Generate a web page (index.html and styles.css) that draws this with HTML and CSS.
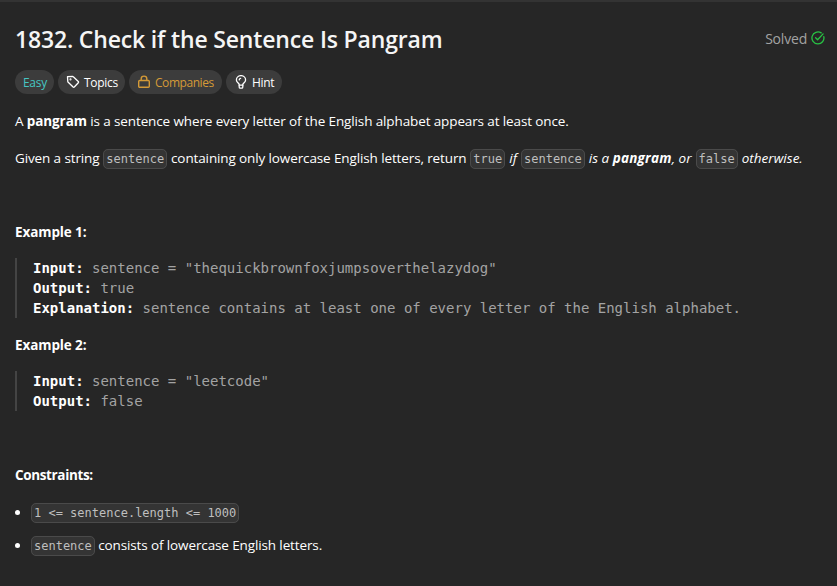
FILE: index.html
```html
<!DOCTYPE html>
<html lang="en">
<head>
<meta charset="utf-8">
<title>1832. Check if the Sentence Is Pangram</title>
<link rel="stylesheet" href="styles.css">
</head>
<body>
<main class="problem">
  <header class="heading">
    <h1>1832. Check if the Sentence Is Pangram</h1>
    <div class="status"><span>Solved</span>
      <svg width="14" height="14" viewBox="0 0 14 14" fill="none" stroke="currentColor" stroke-width="1.3" stroke-linecap="round" stroke-linejoin="round"><path d="M10.2 1.9A6 6 0 1 0 12.800 5.600"/><path d="M4.600 6.800l2 1.900 5.500-5.800"/></svg>
    </div>
  </header>
  <div class="tags">
    <span class="tag easy"><span>Easy</span></span>
    <span class="tag topics"><svg width="14" height="14" viewBox="0 0 14 14" fill="none" stroke="currentColor" stroke-width="1.3" stroke-linejoin="round"><path d="M1.500 1.700l5-.2q.5 0 .8.3l5 4.700q.6.6 0 1.200l-4 4.300q-.6.6-1.200 0L2.200 7.300Q1.800 6.900 1.800 6.400z"/><circle cx="4.500" cy="4.400" r=".4"/></svg><span>Topics</span></span>
    <span class="tag companies"><svg width="14" height="14" viewBox="0 0 14 14" fill="none" stroke="currentColor" stroke-width="1.4" stroke-linejoin="round"><rect x="1.700" y="5.500" width="10.600" height="6.800" rx="1"/><path d="M4.200 5.500V3.700a2.800 2.600 0 0 1 5.600 0v1.800"/></svg><span>Companies</span></span>
    <span class="tag hint"><svg width="14" height="14" viewBox="0 0 14 14" fill="none" stroke="currentColor" stroke-width="1.3" stroke-linecap="round" stroke-linejoin="round"><path d="M5.200 10.200V9.500C5.200 8.200 2.400 7.500 2.400 4.900a4.600 4.300 0 0 1 9.200 0c0 2.600-2.800 3.300-2.800 4.600v.7z"/><path d="M5.200 10.200v1.700q0 1.200 1 1.200h1.600q1 0 1-1.200v-1.700M5.200 4.900Q5.300 3.600 6.600 3.400"/></svg><span>Hint</span></span>
  </div>
  <section class="content">
    <p class="intro">A <strong>pangram</strong> is a sentence where every letter of the English alphabet appears at least once.</p>
    <p>Given a string <code>sentence</code> containing only lowercase English letters, return <code>true</code><em> if </em><code>sentence</code><em> is a <strong>pangram</strong>, or </em><code>false</code><em> otherwise.</em></p>
    <p>&nbsp;</p>
    <p><strong>Example 1:</strong></p>
<pre><b>Input:</b> sentence = "thequickbrownfoxjumpsoverthelazydog"
<b>Output:</b> true
<b>Explanation:</b> sentence contains at least one of every letter of the English alphabet.</pre>
    <p><strong>Example 2:</strong></p>
<pre><b>Input:</b> sentence = "leetcode"
<b>Output:</b> false</pre>
    <p>&nbsp;</p>
    <p class="constraints"><strong>Constraints:</strong></p>
    <ul>
      <li><code>1 &lt;= sentence.length &lt;= 1000</code></li>
      <li><code>sentence</code> consists of lowercase English letters.</li>
    </ul>
  </section>
</main>
</body>
</html>
```
FILE: styles.css
```css
* { box-sizing: border-box; }
body {
  margin: 0;
  height: 586px;
  overflow: hidden;
  background: #262626;
  border-top: 2px solid #333;
  color: #fff;
  font: 14px/21px "Open Sans", "Noto Sans", sans-serif;
}
.problem { padding: 21px 12px 0 15px; }
.heading { display: flex; justify-content: space-between; height: 32px; }
h1 { margin: 0; font-size: 23px; font-weight: 600; line-height: 33px; letter-spacing: -.17px; color: #f5f5f5; white-space: nowrap; }
.status { display: flex; align-items: center; gap: 4px; height: 30px; color: #a3a3a3; letter-spacing: -.2px; }
.status svg { color: #28c244; }
.tags { display: flex; gap: 4px; margin-top: 15px; }
.tag { display: flex; align-items: center; gap: 4px; height: 24px; padding: 0 8px; border-radius: 12px; background: #3c3c3c; font-size: 12px; line-height: 24px; white-space: nowrap; }
.tag span { padding-top: 2px; }
.easy { width: 39px; color: #46c6c2; letter-spacing: -.3px; }
.topics { width: 67px; letter-spacing: -.3px; }
.companies { width: 93px; color: #d49a37; letter-spacing: -.45px; }
.hint { width: 56px; letter-spacing: -.3px; }
.tag svg { flex: none; }
.content { margin-top: 17px; white-space: nowrap; font-size: 13.5px; letter-spacing: -.12px; }
p { height: 21px; margin: 0 0 16px; }
p code { margin: 0 .5px; }
strong { font-weight: 700; letter-spacing: -.1px; }
.constraints strong { letter-spacing: -.36px; }
em { letter-spacing: .02px; }
em strong { letter-spacing: .2px; }
code {
  padding: 2px;
  border: 1px solid #4a4a4a;
  border-radius: 5px;
  background: #343434;
  color: #bfbfbf;
  font: 12px/14px "DejaVu Sans Mono", monospace;
  letter-spacing: 0;
}
pre {
  margin: -1px 0 17px;
  padding-left: 16px;
  border-left: 2px solid #444;
  color: #a3a3a3;
  font: 14px/20px "DejaVu Sans Mono", monospace;
  letter-spacing: 0;
}
pre b { color: #fff; }
ul { margin: 0; padding: 0 0 0 16px; }
li { height: 21px; margin-bottom: 12px; }
```
